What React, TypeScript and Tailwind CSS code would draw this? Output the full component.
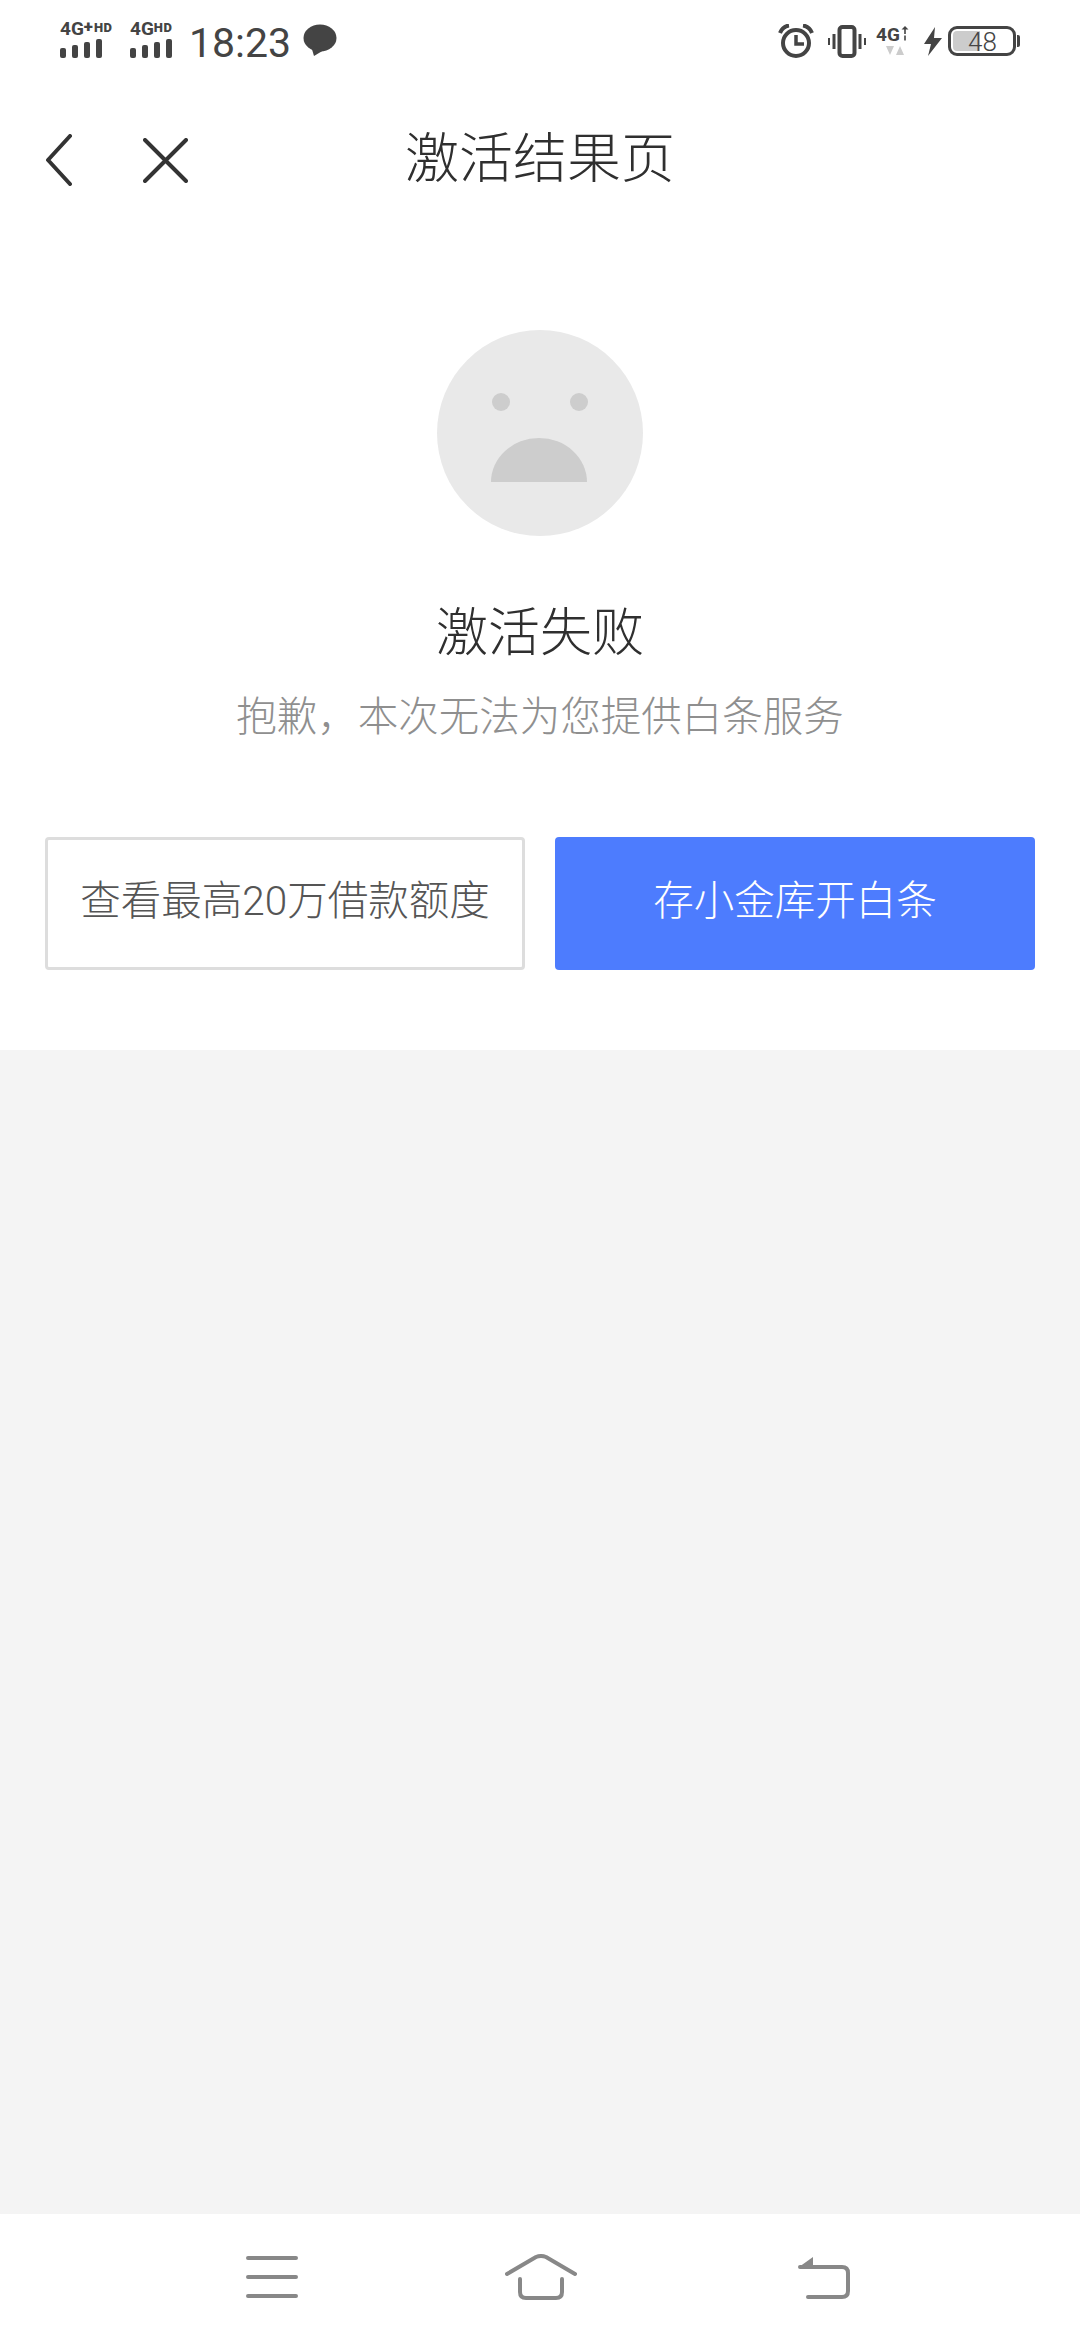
import React from "react";

const FONT = 'Roboto, "Noto Sans CJK SC", sans-serif';

// signal icon: network label above four bars
function Signal({ label, width }: { label: React.ReactNode; width: string }) {
  const bars = ["h-[10px]", "h-[13px]", "h-[16px]", "h-[19px]"];
  return (
    <div className={`flex flex-col ${width}`}>
      <div className="h-[15px] flex items-end font-bold text-[#444] leading-none whitespace-nowrap">{label}</div>
      <div className="h-[20px] flex items-end gap-[6px]">
        {bars.map((h, i) => (
          <div key={i} className={`w-[6px] rounded-[2px] bg-[#444] ${h}`} />
        ))}
      </div>
    </div>
  );
}

function StatusLeft() {
  return (
    <div className="flex items-center">
      <Signal
        width="w-[58px]"
        label={
          <>
            <span className="text-[19px]">4G</span>
            <span className="text-[17px] mb-[3px] font-black">+</span>
            <span className="text-[13px] mb-[4px] ml-[1px] tracking-[0.5px] font-black">HD</span>
          </>
        }
      />
      <div className="ml-[12px]">
        <Signal
          width="w-[46px]"
          label={
            <>
              <span className="text-[19px]">4G</span>
              <span className="text-[13px] mb-[4px] tracking-[0.5px] font-black">HD</span>
            </>
          }
        />
      </div>
      <span className="ml-[13px] text-[41px] leading-none text-[#444] mt-[6px]">18:23</span>
      <svg className="ml-[12px]" width="34" height="33" viewBox="0 0 34 33">
        <ellipse cx="17" cy="14" rx="16.5" ry="13.5" fill="#444" />
        <path d="M8 22 L11 32 L21 26 Z" fill="#444" />
      </svg>
    </div>
  );
}

function StatusRight() {
  return (
    <div className="flex items-center mt-[2px]">
      <svg width="36" height="34" viewBox="0 0 36 34" fill="none" stroke="#444">
        <circle cx="18" cy="19" r="13" strokeWidth="4" />
        <path d="M18 11 V20 H26" strokeWidth="3.5" />
        <path d="M2 9 C4 4 7 2 11 1.5 M34 9 C32 4 29 2 25 1.5" strokeWidth="4" />
      </svg>
      <svg className="ml-[14px]" width="38" height="33" viewBox="0 0 38 33" fill="none" stroke="#444">
        <rect x="11.5" y="2" width="15" height="29" rx="3" strokeWidth="4" />
        <path d="M6 9 V24 M32 9 V24" strokeWidth="3" />
        <path d="M1 13 V20 M37 13 V20" strokeWidth="2" />
      </svg>
      <div className="ml-[10px] w-[36px] h-[32px] flex flex-col items-start">
        <div className="h-[17px] flex items-start font-bold text-[19px] leading-none text-[#444]">
          4G
          <svg className="ml-[1px] mt-[1px]" width="8" height="15" viewBox="0 0 7 15" fill="#444">
            <path d="M3.5 0 L7 3.5 H4.3 V8 H2.7 V3.5 H0 Z" />
            <rect x="2.7" y="9.5" width="1.6" height="5" />
          </svg>
        </div>
        <svg className="ml-[10px] mt-[4px]" width="18" height="10" viewBox="0 0 18 10" fill="#ccc">
          <path d="M0 0 H8 L4 9 Z M10 9 L14 0 L18 9 Z" />
        </svg>
      </div>
      <svg className="ml-[12px]" width="18" height="29" viewBox="0 0 18 29" fill="#444">
        <path d="M11 0 L0 17 H7 L4 29 L18 11 H10 Z" />
      </svg>
      <div className="ml-[6px] relative w-[72px] h-[30px] flex items-center">
        <div className="w-[68px] h-[30px] rounded-[9px] border-[3px] border-[#444] p-[2px]">
          <div className="w-[27px] h-full rounded-l-[4px] bg-[#ccc]" />
        </div>
        <div className="w-[3px] h-[12px] ml-[1px] rounded-r-[2px] bg-[#444]" />
        <span className="absolute left-[20px] top-[3px] text-[26px] leading-[26px] font-light text-[#444]">48</span>
      </div>
    </div>
  );
}

function ActionButton({ primary, children }: { primary?: boolean; children: React.ReactNode }) {
  return (
    <button
      className={
        primary
          ? "h-[133px] pb-[5px] rounded-[4px] bg-[#4d7cfe] text-white text-[40.5px] font-light whitespace-nowrap"
          : "h-[133px] pb-[5px] rounded-[4px] border-[3px] border-[#dddddd] bg-white text-[#555] text-[40.5px] font-light whitespace-nowrap"
      }
    >
      {children}
    </button>
  );
}

export default function App() {
  return (
    <div className="w-[1080px] h-[2340px] flex flex-col bg-[#f4f4f4]" style={{ fontFamily: FONT }}>
      <div className="bg-white pb-[80px]">
        {/* Status bar */}
        <div className="h-[80px] pl-[60px] pr-[60px] flex items-center justify-between">
          <StatusLeft />
          <StatusRight />
        </div>

        {/* Title bar */}
        <div className="h-[160px] grid grid-cols-[1fr_auto_1fr] items-center">
          <div className="pl-[45px] flex items-center">
            <svg width="28" height="52" viewBox="0 0 28 52" fill="none" stroke="#333" strokeWidth="4" strokeLinecap="round" strokeLinejoin="round">
              <path d="M25 2 L3 26 L25 50" />
            </svg>
            <svg className="ml-[70px]" width="45" height="45" viewBox="0 0 45 45" fill="none" stroke="#333" strokeWidth="4" strokeLinecap="round">
              <path d="M2 2 L43 43 M43 2 L2 43" />
            </svg>
          </div>
          <h1 className="text-[54px] leading-none text-[#2f2f2f] font-light">激活结果页</h1>
          <div />
        </div>

        {/* Result */}
        <div className="mt-[90px] flex flex-col items-center">
          <svg width="206" height="206" viewBox="0 0 206 206">
            <circle cx="103" cy="103" r="103" fill="#e9e9e9" />
            <circle cx="64" cy="72" r="9" fill="#cdcdcd" />
            <circle cx="142" cy="72" r="9" fill="#cdcdcd" />
            <path d="M54 152 A48 44 0 0 1 150 152 Z" fill="#cdcdcd" />
          </svg>
          <p className="mt-[63px] text-[52px] leading-[70px] text-[#2f2f2f] font-light">激活失败</p>
          <p className="mt-[20px] text-[40.5px] leading-[56px] text-[#8f8f8f] font-light">抱歉，本次无法为您提供白条服务</p>
        </div>

        {/* Actions */}
        <div className="mt-[92px] px-[45px] grid grid-cols-2 gap-[30px]">
          <ActionButton>查看最高20万借款额度</ActionButton>
          <ActionButton primary>存小金库开白条</ActionButton>
        </div>
      </div>

      <div className="flex-1" />

      {/* Navigation bar */}
      <div className="h-[126px] bg-white flex items-center justify-between pl-[246px] pr-[230px]">
        <svg width="52" height="42" viewBox="0 0 52 42" fill="none" stroke="#888" strokeWidth="4" strokeLinecap="round">
          <path d="M2 2 H50 M2 21 H50 M2 40 H50" />
        </svg>
        <svg className="mr-[14px]" width="72" height="46" viewBox="0 0 72 46" fill="none" stroke="#888" strokeWidth="4" strokeLinecap="round" strokeLinejoin="round">
          <path d="M2 20 L31 3 Q36 1 41 3 L70 20" />
          <path d="M15 25 V38 Q15 44 21 44 H51 Q57 44 57 38 V25" />
        </svg>
        <svg width="52" height="44" viewBox="0 0 52 44" fill="none" stroke="#888" strokeWidth="4" strokeLinecap="round">
          <path d="M2 12 H44 Q50 12 50 18 V36 Q50 42 44 42 H10" />
          <path d="M1 12 L15 2 V12 Z" fill="#888" stroke="none" />
        </svg>
      </div>
    </div>
  );
}
